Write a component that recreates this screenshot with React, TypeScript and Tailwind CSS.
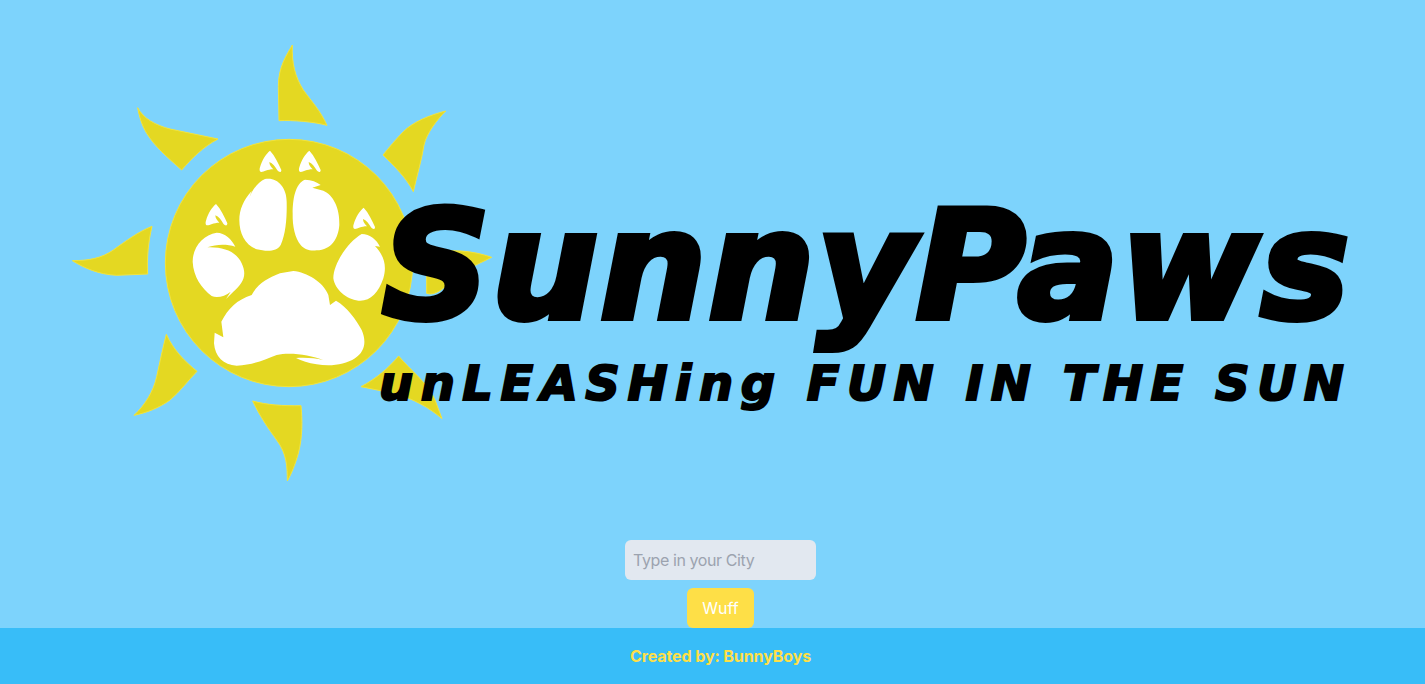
function SunLogo() {
  const claw = "M630 362 C645 378 655 400 664 420 C664 428 658 428 652 421 C646 410 638 400 628 396 C628 405 634 412 640 418 C622 418 612 426 604 426 C598 426 598 418 600 412 C606 390 618 372 630 362Z"
  return (
    <svg width="450" height="460" viewBox="0 0 1350 1380" className="block">
      <g fill="#e4d822" stroke="#f3e43c" strokeWidth="3">
        <path d="M697 45 C680 75 655 110 655 170 L657 272 C700 270 760 275 801 286 C780 240 755 215 730 180 C705 140 695 100 697 45Z" />
        <path d="M1157 243 C1110 255 1060 275 1030 305 C1010 325 985 355 969 375 C1005 410 1040 445 1060 485 C1070 440 1085 390 1092 345 C1100 310 1130 270 1157 243Z" />
        <path d="M1100 672 C1170 655 1240 662 1295 682 C1260 700 1220 715 1190 740 C1160 765 1130 800 1100 790Z" />
        <path d="M1016 978 C1050 1020 1105 1060 1125 1110 L1146 1166 C1110 1135 1060 1105 1000 1090 L903 1070 C950 1045 985 1015 1016 978Z" />
        <path d="M578 1113 C620 1125 670 1128 723 1127 C727 1170 728 1220 715 1270 C705 1305 695 1330 682 1353 C682 1310 680 1270 650 1230 C625 1195 600 1160 578 1113Z" />
        <path d="M319 913 C340 960 375 995 411 1024 C385 1050 360 1085 330 1110 C295 1135 260 1148 222 1156 C255 1125 280 1085 290 1040 C300 995 308 955 319 913Z" />
        <path d="M276 589 C235 605 195 635 160 660 C125 685 85 692 37 692 C75 715 115 733 170 736 L263 732 C260 685 265 635 276 589Z" />
        <path d="M233 233 C250 265 285 285 330 297 L474 327 C430 350 395 385 365 420 C320 380 285 350 260 310 C245 285 238 260 233 233Z" />
        <circle cx="687" cy="699" r="371" />
      </g>
      <g fill="#fff">
        {/* claws */}
        <path d={claw} />
        <path d={claw} transform="translate(118 0)" />
        <path d={claw} transform="translate(-162 160)" />
        <path d={claw} transform="translate(281 171)" />
        {/* toes */}
        <path d="M615 447 C650 440 680 470 680 515 C681 560 678 610 662 645 C650 666 620 665 590 658 C555 645 538 610 538 570 C538 540 550 510 575 483 L565 512 C575 480 595 455 615 447Z" />
        <path d="M735 449 C755 450 770 455 782 465 L757 473 L790 482 C820 495 840 535 838 585 C835 625 815 660 770 661 C750 663 735 660 722 645 C705 625 697 590 698 550 C698 510 705 460 735 449Z" />
        <path d="M470 608 C495 608 515 628 526 650 C500 642 470 642 442 652 C490 650 530 665 545 700 C562 735 550 760 520 785 L498 807 L512 785 C495 800 470 805 455 798 C425 775 400 740 398 695 C398 650 430 615 470 608Z" />
        <path d="M905 612 C930 612 950 630 960 650 L945 648 C975 680 980 710 970 745 C955 790 930 815 895 812 C860 808 825 780 820 745 C820 700 865 635 905 612Z" />
        {/* main pad */}
        <path d="M700 723 C740 727 790 755 805 795 L810 825 L828 812 C860 830 890 870 905 900 C920 935 915 965 885 985 C855 1005 810 1010 770 1003 C745 1000 725 992 708 984 C735 982 765 984 790 990 C750 975 690 965 650 975 C610 990 580 1005 530 1007 C490 1005 465 980 462 940 L464 908 L490 922 L484 875 C505 835 530 810 575 795 C590 765 620 745 660 730Z" />
      </g>
    </svg>
  )
}

export default function App() {
  return (
    <div className="min-h-screen bg-[#7dd3fc] font-['Inter',sans-serif] flex flex-col">
      <header className="relative h-[540px] pt-[30px] pl-[60px]">
        <SunLogo />
        <div className="absolute left-[382px] top-[183px] w-[970px] text-black font-['DejaVu_Sans',sans-serif] font-bold italic">
          <h1 className="text-[150px] leading-[166px] tracking-[1.5px] whitespace-nowrap [-webkit-text-stroke:6px_#000]">SunnyPaws</h1>
          <p className="-ml-[3px] text-[48px] leading-[68px] tracking-[7.5px] whitespace-nowrap [-webkit-text-stroke:2px_#000]">unLEASHing FUN IN THE SUN</p>
        </div>
      </header>

      <main className="flex flex-col items-center gap-2 pl-4">
        <input
          type="text"
          placeholder="Type in your City"
          className="w-[191px] h-10 p-2 rounded-md bg-[#e2e8f0] text-base tracking-[-0.4px] placeholder:text-[#9ca3af] outline-none"
        />
        <button className="h-10 w-[67px] rounded-md bg-[#fedf47] text-white text-base">Wuff</button>
      </main>

      <footer className="h-14 bg-[#38bdf8] flex items-center justify-center pl-4">
        <p className="text-[#fedf47] font-bold text-base tracking-[-0.1px]">Created by: BunnyBoys</p>
      </footer>
    </div>
  )
}
